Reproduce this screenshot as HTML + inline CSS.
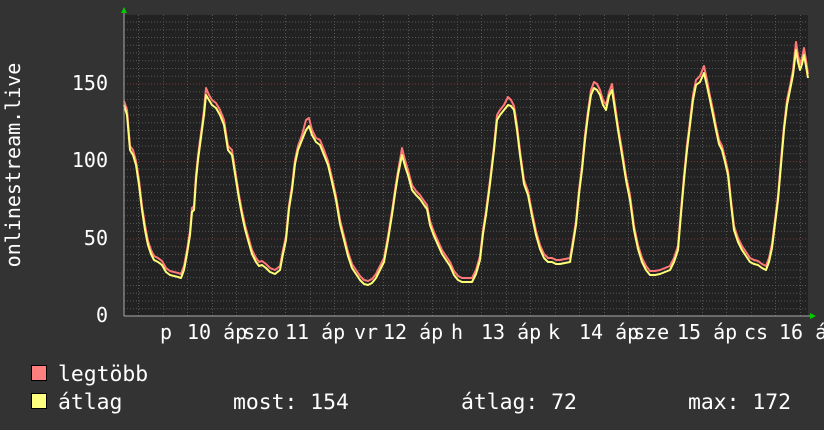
<!DOCTYPE html>
<html><head><meta charset="utf-8"><style>
html,body{margin:0;padding:0;background:#333;}
svg{display:block;}
text{font-family:"DejaVu Sans Mono","Liberation Mono",monospace;font-size:20px;fill:#fff;}
.lg{font-size:21.4px;}
</style></head><body>
<svg width="824" height="430" viewBox="0 0 824 430">
<rect width="824" height="430" fill="#333"/>
<rect x="124" y="15" width="684" height="301" fill="#222"/>
<g id="grid"></g>
<g stroke-linejoin="round" fill="none" stroke-width="2">
<polyline stroke="#ff7777" points="124,101 127,110 130,146 133,150 136,161 139,180 142,206 145,225 148,241 151,250 154,256 158,258 162,261 166,268 170,271 174,272 178,273 181,274 184,266 187,250 190,231 192,208 194,206 196,175 198,156 200,140 202,126 204,110 206,88 209,95 212,100 216,103 220,110 224,120 228,146 232,150 236,176 239,195 242,211 245,225 248,236 252,250 256,258 259,262 262,261 266,264 270,268 275,270 280,266 283,250 286,236 289,205 292,186 295,160 298,146 302,135 306,120 309,118 312,130 316,138 320,140 324,150 328,161 332,178 336,196 340,220 344,236 348,252 352,264 356,270 360,276 364,280 368,281 372,279 376,274 380,266 384,258 388,236 392,211 395,190 398,171 400,160 402,148 405,160 408,170 412,185 416,191 420,195 424,201 427,205 430,221 434,232 438,241 442,250 446,256 450,262 454,271 458,276 462,278 467,278 472,278 476,270 480,256 483,230 486,211 490,180 494,146 497,115 500,110 504,105 508,97 511,100 514,106 517,125 520,151 524,180 528,191 532,212 536,231 540,245 544,254 548,258 552,258 556,260 560,260 565,259 570,258 573,240 576,221 579,190 582,166 585,135 588,111 591,90 594,82 597,84 600,90 603,100 606,105 609,92 612,84 615,105 618,126 622,150 626,176 630,195 634,226 638,245 642,258 646,266 650,271 655,271 660,270 665,268 670,266 674,258 678,246 681,210 684,176 687,145 690,121 693,95 696,80 700,76 704,66 707,80 710,96 713,110 716,126 719,140 722,146 725,158 728,171 731,200 734,226 738,238 742,246 746,252 750,258 754,260 758,261 762,264 766,266 769,258 772,244 775,220 778,196 781,160 784,126 787,100 790,86 793,70 796,42 798,55 800,64 802,58 804,48 806,60 808,74"/>
<polyline stroke="#ffff77" points="124,105 127,115 130,150 133,155 136,165 139,185 142,210 145,230 148,245 151,254 154,260 158,262 162,265 166,272 170,275 174,276 178,277 181,278 184,270 187,254 190,235 192,212 194,210 196,180 198,160 200,145 202,130 204,115 206,95 209,100 212,105 216,108 220,115 224,125 228,150 232,155 236,180 239,199 242,215 245,229 248,240 252,254 256,262 259,266 262,265 266,268 270,272 275,274 280,270 283,254 286,240 289,209 292,190 295,164 298,150 302,140 306,130 309,126 312,135 316,142 320,145 324,155 328,165 332,182 336,200 340,224 344,240 348,256 352,268 356,274 360,280 364,284 368,285 372,283 376,278 380,270 384,262 388,240 392,215 395,194 398,175 400,165 402,155 405,166 408,175 412,190 416,195 420,199 424,205 427,209 430,225 434,236 438,245 442,254 446,260 450,266 454,275 458,280 462,282 467,282 472,282 476,274 480,260 483,234 486,215 490,184 494,150 497,120 500,115 504,110 508,105 511,106 514,110 517,130 520,155 524,184 528,195 532,216 536,235 540,249 544,258 548,262 552,262 556,264 560,264 565,263 570,262 573,244 576,225 579,194 582,170 585,140 588,115 591,95 594,88 597,90 600,95 603,105 606,110 609,96 612,90 615,110 618,130 622,155 626,180 630,200 634,230 638,249 642,262 646,270 650,275 655,275 660,274 665,272 670,270 674,262 678,250 681,214 684,180 687,150 690,125 693,100 696,85 700,82 704,73 707,86 710,100 713,115 716,130 719,144 722,150 725,162 728,175 731,204 734,230 738,242 742,250 746,256 750,262 754,264 758,265 762,268 766,270 769,262 772,248 775,224 778,200 781,165 784,130 787,105 790,90 793,75 796,50 798,62 800,70 802,64 804,55 806,66 808,78"/>
</g>
<path d="M124,316H812" stroke="#aaa" stroke-width="1"/>
<path d="M124,316V10" stroke="#aaa" stroke-width="1"/>
<polygon points="121,13 127,13 124,7" fill="#0c0"/>
<polygon points="810,313 810,319 816,316" fill="#0c0"/>
<g text-anchor="end">
<text x="108" y="322">0</text>
<text x="108" y="245">50</text>
<text x="108" y="167">100</text>
<text x="108" y="90">150</text>
</g>
<text transform="translate(20,165) rotate(-90)" text-anchor="middle">onlinestream.live</text>
<g>
<text x="160" y="339">p</text><text x="187" y="339">10 áp</text>
<text x="243" y="339">szo</text><text x="285" y="339">11 áp</text>
<text x="354" y="339">vr</text><text x="383" y="339">12 áp</text>
<text x="451" y="339">h</text><text x="481" y="339">13 áp</text>
<text x="548" y="339">k</text><text x="579" y="339">14 áp</text>
<text x="633" y="339">sze</text><text x="677" y="339">15 áp</text>
<text x="744" y="339">cs</text><text x="779" y="339">16 á</text>
</g>
<rect x="31.5" y="365.5" width="15" height="15" fill="#ff7f7f" stroke="#000"/>
<rect x="31.5" y="393.5" width="15" height="15" fill="#ffff7f" stroke="#000"/>
<text class="lg" x="58" y="381">legtöbb</text>
<text class="lg" x="58" y="409">átlag</text>
<text class="lg" x="233" y="409">most: 154</text>
<text class="lg" x="461" y="409">átlag: 72</text>
<text class="lg" x="688" y="409">max: 172</text>
</svg>
<script>
(function(){
var ns="http://www.w3.org/2000/svg",g=document.getElementById("grid");
function ln(x1,y1,x2,y2,c){var l=document.createElementNS(ns,"line");l.setAttribute("x1",x1);l.setAttribute("y1",y1);l.setAttribute("x2",x2);l.setAttribute("y2",y2);l.setAttribute("stroke",c);l.setAttribute("stroke-dasharray","1,2");g.appendChild(l);}
for(var i=1;i<39;i++){var y=316-i*7.75;var major=(i%10==0);ln(124,y+0.5,808,y+0.5,major?"#7a3a3a":"#555");}
for(var x=138;x<808;x+=24.5){var xx=Math.round(x)+0.5;var major=Math.abs(((x-162)%98+98)%98)<1;ln(xx,15,xx,316,major?"#7a3a3a":"#555");}
})();
</script>
</body></html>
